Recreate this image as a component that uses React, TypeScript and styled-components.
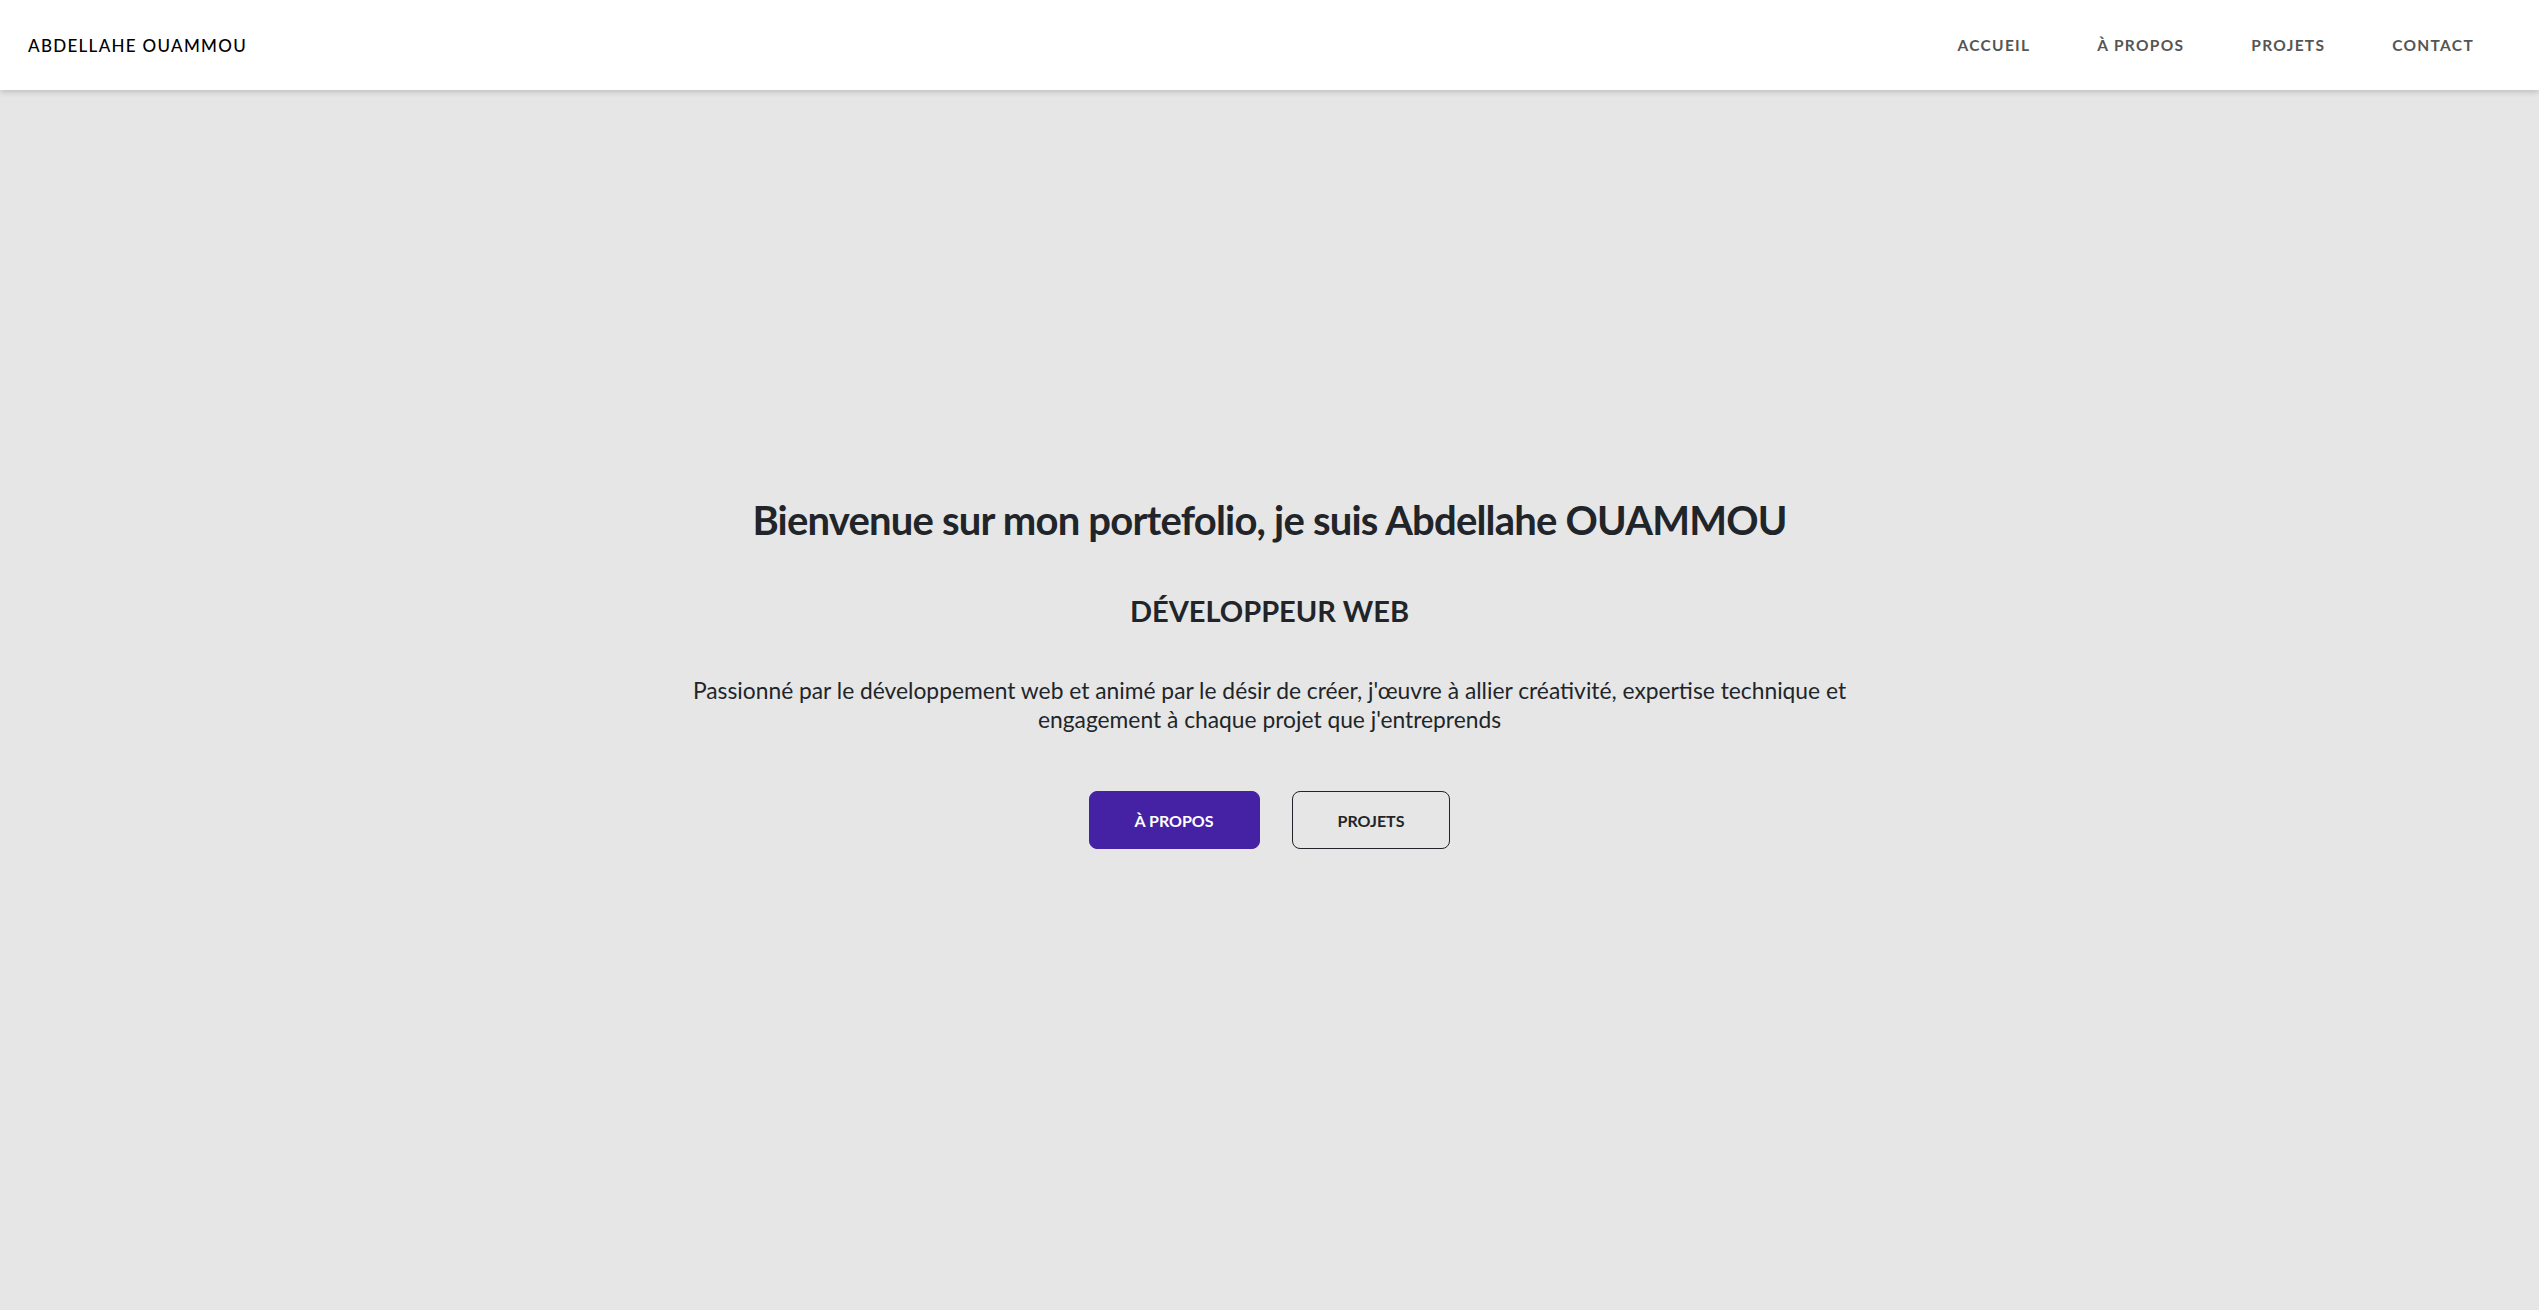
import React from 'react';
import styled, { createGlobalStyle } from 'styled-components';

const GlobalStyle = createGlobalStyle`
  * {
    box-sizing: border-box;
  }

  html, body {
    margin: 0;
    padding: 0;
    height: 100%;
  }

  body {
    font-family: Lato, "Noto Sans", sans-serif;
    background-color: #e6e6e6;
    color: #212529;
  }
`;

const navLinks = ['Accueil', 'À propos', 'Projets', 'Contact'];

const App: React.FC = () => {
  return (
    <>
      <GlobalStyle />
      <Page>
        <Header>
          <Brand href="#">Abdellahe OUAMMOU</Brand>
          <Nav>
            {navLinks.map((link) => (
              <NavLink key={link} href="#">
                {link}
              </NavLink>
            ))}
          </Nav>
        </Header>

        <Hero>
          <Title>Bienvenue sur mon portefolio, je suis Abdellahe OUAMMOU</Title>
          <Subtitle>Développeur web</Subtitle>
          <Intro>
            Passionné par le développement web et animé par le désir de créer, j'œuvre à allier
            créativité, expertise technique et engagement à chaque projet que j'entreprends
          </Intro>
          <Actions>
            <Button href="#" $primary>
              À propos
            </Button>
            <Button href="#">Projets</Button>
          </Actions>
        </Hero>
      </Page>
    </>
  );
};

const Page = styled.div`
  display: flex;
  flex-direction: column;
  min-height: 100vh;
`;

const Header = styled.header`
  height: 90px;
  padding: 0 28px;
  display: flex;
  align-items: center;
  justify-content: space-between;
  background-color: #fff;
  box-shadow: 0 2px 6px rgba(0, 0, 0, 0.18);
  position: relative;
  z-index: 1;
`;

const Brand = styled.a`
  font-size: 17px;
  font-weight: 500;
  letter-spacing: 1.3px;
  text-transform: uppercase;
  color: #000;
  text-decoration: none;
`;

const Nav = styled.nav`
  display: flex;
  align-items: center;
  gap: 67px;
  padding-right: 37px;
`;

const NavLink = styled.a`
  font-size: 15.5px;
  font-weight: 700;
  letter-spacing: 1.3px;
  text-transform: uppercase;
  color: #555;
  text-decoration: none;
`;

const Hero = styled.main`
  flex: 1;
  display: flex;
  flex-direction: column;
  align-items: center;
  justify-content: center;
  text-align: center;
  padding-bottom: 55px;
`;

const Title = styled.h1`
  margin: 0 0 50px;
  font-size: 40px;
  font-weight: 700;
  letter-spacing: -0.8px;
  line-height: 1.2;
`;

const Subtitle = styled.h2`
  margin: 0 0 48px;
  font-size: 29px;
  font-weight: 700;
  text-transform: uppercase;
  line-height: 1.2;
`;

const Intro = styled.p`
  margin: 0 0 57px;
  max-width: 1200px;
  font-size: 22.8px;
  line-height: 29px;
`;

const Actions = styled.div`
  display: flex;
  gap: 32px;
`;

const Button = styled.a<{ $primary?: boolean }>`
  display: flex;
  align-items: center;
  justify-content: center;
  height: 58px;
  padding: 0 45px;
  border-radius: 8px;
  font-size: 16px;
  font-weight: 700;
  text-transform: uppercase;
  text-decoration: none;
  color: ${(p) => (p.$primary ? '#fff' : '#212529')};
  background-color: ${(p) => (p.$primary ? '#4521a4' : 'transparent')};
  border: 1px solid ${(p) => (p.$primary ? '#4521a4' : '#212529')};
`;

export default App;
